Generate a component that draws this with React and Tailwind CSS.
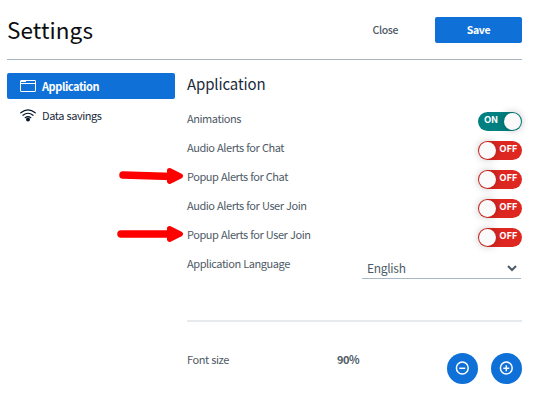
const rows = [
  { label: 'Animations', on: true },
  { label: 'Audio Alerts for Chat', on: false },
  { label: 'Popup Alerts for Chat', on: false, arrow: 'M123 12 L172 13.500' },
  { label: 'Audio Alerts for User Join', on: false },
  { label: 'Popup Alerts for User Join', on: false, arrow: 'M121 13 L172 13' },
];

function Toggle({ on }) {
  return (
    <div
      className={`relative mt-[2px] flex h-[19px] w-11 items-center rounded-full text-[9.5px] font-bold leading-none tracking-[-0.25px] text-white ${
        on ? 'justify-start bg-[#008081] pl-[6px]' : 'justify-end bg-[#df2721] pr-[5px]'
      }`}
    >
      <span className="-mt-[3px]">{on ? 'ON' : 'OFF'}</span>
      <span
        className={`absolute top-[1px] size-[17px] rounded-full bg-[#fafafa] shadow-[0_0_8px_rgba(0,0,0,0.3)] ${
          on ? 'right-[1px]' : 'left-[1px]'
        }`}
      />
    </div>
  );
}

function Arrow({ d }) {
  return (
    <svg className="absolute -left-[187px] top-0 h-[29px] w-[187px]" viewBox="0 0 187 29" fill="none" stroke="#fe0000" strokeLinecap="round" strokeLinejoin="round">
      <path d={d} strokeWidth="7.500" />
      <path d="M169.500 7.500L180.500 13L169.500 18.500Z" fill="#fe0000" strokeWidth="5" />
    </svg>
  );
}

function ZoomButton({ plus }) {
  return (
    <button className="mt-[2px] flex size-[31px] items-center justify-center rounded-full bg-[#0f70d7]">
      <svg className="size-[15px]" viewBox="0 0 15 15" fill="none" stroke="white" strokeWidth="1.500">
        <circle cx="7.300" cy="7" r="5.900" />
        <path d="M4.300 7.300H10.300" />
        {plus && <path d="M7.300 4.300V10.300" />}
      </svg>
    </button>
  );
}

export default function App() {
  return (
    <div className="h-[414px] w-[534px] overflow-hidden bg-white pl-[7px] pr-3 font-['Noto_Sans_CJK_SC',sans-serif] text-[11px] leading-4 tracking-[-0.44px] text-[#4e5a66] [word-spacing:0.5px]">
      <header className="flex h-[60px] items-center border-b border-[#a7b3bd]">
        <h1 className="-mt-[2px] flex-1 text-[22.5px] leading-8 tracking-[0.1px] text-[#0b0d10]">Settings</h1>
        <button className="mr-[37px] text-[10.5px] font-medium tracking-[-0.38px]">Close</button>
        <button className="h-[26px] w-[87px] rounded-[2px] bg-[#0f70d7] text-[10.5px] font-bold tracking-[-0.38px] text-white">Save</button>
      </header>
      <div className="flex pt-[13px]">
        <nav className="w-[168px] text-[#1c2b3c]">
          <div className="flex h-[26px] items-center gap-[6px] rounded-[2px] bg-[#0f70d7] pl-[13px] font-bold text-white">
            <svg className="h-[12px] w-[16px]" viewBox="0 0 16 12" fill="none" stroke="white">
              <rect x="0.500" y="0.500" width="15" height="11" rx="0.500" />
              <path d="M0.500 3.500H15.500M1 1.500H6" />
            </svg>
            Application
          </div>
          <div className="mt-[3px] flex h-[26px] items-center gap-[6px] pl-[13px]">
            <svg className="h-[13px] w-[16px]" viewBox="0 0 16 13" fill="none" stroke="#06172a" strokeWidth="1.200" strokeLinecap="round">
              <path d="M0.800 3.800Q8 -2.200 15.200 3.800M3 6.300Q8 2.200 13 6.300M5.200 8.700Q8 6.400 10.800 8.700" />
              <circle cx="8" cy="10.500" r="2" fill="#06172a" stroke="none" />
            </svg>
            Data savings
          </div>
        </nav>
        <main className="ml-3 w-[335px]">
          <h2 className="h-[32px] text-[15px] leading-[21px] tracking-[-0.13px] text-[#1c2b3c]">Application</h2>
          {rows.map((r) => (
            <div key={r.label} className="relative flex h-[29px] items-start justify-between pt-[5px]">
              {r.arrow && <Arrow d={r.arrow} />}
              <span>{r.label}</span>
              <Toggle on={r.on} />
            </div>
          ))}
          <div className="flex h-[72px] items-start justify-between pt-[5px]">
            <span>Application Language</span>
            <div className="mr-px mt-px flex h-[23px] w-[159px] items-center justify-between border-b border-[#a7b9c5] pl-[5px] pr-[4px] text-[12px] tracking-[-0.3px]">
              <span className="pt-[2px]">English</span>
              <svg className="mt-[2px] size-[10px]" viewBox="0 0 10 10" fill="none" stroke="#4e5a66" strokeWidth="2">
                <path d="M1 3L5 7L9 3" />
              </svg>
            </div>
          </div>
          <div className="mt-[-2px] h-[2px] bg-[#e7eaed]" />
          <div className="flex pt-[29px]">
            <span className="w-[150px]">Font size</span>
            <span className="flex-1 font-bold">90%</span>
            <div className="flex gap-[13px]">
              <ZoomButton />
              <ZoomButton plus />
            </div>
          </div>
        </main>
      </div>
    </div>
  );
}
